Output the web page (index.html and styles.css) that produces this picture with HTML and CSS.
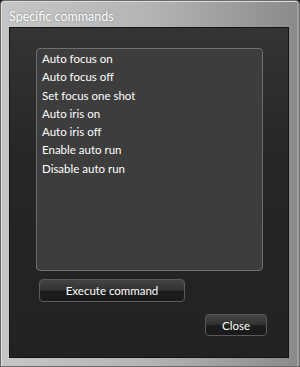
FILE: index.html
```html
<!DOCTYPE html>
<html lang="en">
<head>
    <meta charset="UTF-8">
    <meta name="viewport" content="width=device-width, initial-scale=1.0">
    <title>Specific commands</title>
    <link rel="stylesheet" href="styles.css">
</head>
<body>
    <div class="window">
        <div class="title">Specific commands</div>
        <div class="panel">
            <ul class="list">
                <li>Auto focus on</li>
                <li>Auto focus off</li>
                <li>Set focus one shot</li>
                <li>Auto iris on</li>
                <li>Auto iris off</li>
                <li>Enable auto run</li>
                <li>Disable auto run</li>
            </ul>
            <button class="btn btn-execute">Execute command</button>
            <div class="footer">
                <button class="btn btn-close">Close</button>
            </div>
        </div>
    </div>
</body>
</html>
```

FILE: styles.css
```css
html, body {
    margin: 0;
    padding: 0;
    background-color: #1a1a1a;
}
body {
    font-family: Lato, "Open Sans", sans-serif;
    font-size: 12px;
}
.window {
    width: 300px;
    height: 367px;
    box-sizing: border-box;
    padding: 0 10px 8px 8px;
    display: flex;
    flex-direction: column;
    background: linear-gradient(to right, #c6c6c6 0%, #b4b4b4 50%, #8a8a8a 100%);
    border: 1px solid #6a6a6a;
    border-radius: 4px 4px 0 0;
    box-shadow: inset 1px 1px 0 #dcdcdc, inset -2px 0 0 #a0a0a0;
}
.title {
    height: 26px;
    line-height: 31px;
    color: #fff;
    font-size: 12.5px;
    text-shadow: 0 0 2px rgba(0, 0, 0, 0.35);
}
.panel {
    flex: 1;
    display: flex;
    flex-direction: column;
    background: linear-gradient(to bottom, #343434 0%, #262626 40%, #222 100%);
    border: 1px solid #151515;
    padding: 20px 25px 0 26px;
}
.list {
    list-style: none;
    margin: 0;
    padding: 1px 0 0 5px;
    height: 220px;
    background-color: #3d3d3d;
    border: 1px solid #6e6e6e;
    border-radius: 4px;
}
.list li {
    color: #fff;
    font-size: 11.5px;
    height: 18.3px;
    line-height: 18.3px;
}
.btn {
    font-family: Lato, "Open Sans", sans-serif;
    font-size: 11.5px;
    color: #fff;
    background: linear-gradient(to bottom, #444 0%, #333 45%, #1c1c1c 55%, #1a1a1a 100%);
    border: 1px solid #5a5a5a;
    border-radius: 4px;
    padding: 0;
    cursor: pointer;
}
.btn-execute {
    margin: 8px 0 0 3px;
    width: 146px;
    height: 23px;
}
.footer {
    display: flex;
    justify-content: flex-end;
    padding: 12px 0 0 0;
}
.btn-close {
    width: 62px;
    height: 22px;
    margin-right: -4px;
}
```
